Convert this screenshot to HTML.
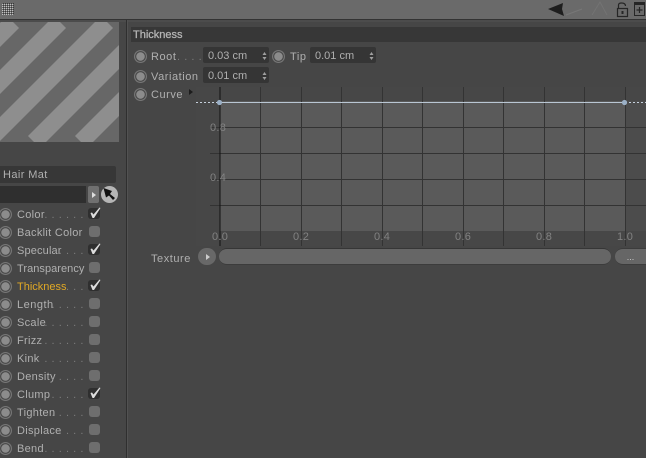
<!DOCTYPE html>
<html><head><meta charset="utf-8">
<style>
html,body{margin:0;padding:0;background:#464646}
#p{position:relative;width:646px;height:458px;overflow:hidden;background:#464646;font-family:"Liberation Sans",sans-serif;font-size:11px;color:#b0b0b0}
#p div{position:absolute;white-space:nowrap}
.t{line-height:14px;letter-spacing:.55px}
.s{line-height:14px;letter-spacing:.3px;left:17px}
.d{color:#7c7c7c;line-height:14px;right:562px;letter-spacing:.55px}
.r{width:13px;height:13px;border-radius:50%;background:radial-gradient(circle,#8c8c8c 0,#8c8c8c 3.9px,#454545 4.6px,#484848 5.1px,#787878 5.6px,#747474 6.5px)}
.cb{width:11px;height:11px;left:89px;border-radius:3px;background:#6e6e6e}
.cb.on{left:88px;width:12px;background:#2f2f2f}
.f{background:#353535;border-radius:2px;height:16px;line-height:18px;color:#b0b0b0;padding-left:5px;box-sizing:border-box;width:66px}
.ax{color:#828282;line-height:13px;letter-spacing:.3px}
</style></head><body>
<div id="p">
<div style="left:0;top:0;width:646px;height:19px;background:#6a6a6a"></div>
<div style="left:0;top:19px;width:646px;height:1px;background:#333"></div>
<div style="left:0;top:20px;width:646px;height:2px;background:#4c4c4c"></div>
<svg style="position:absolute;left:0;top:0" width="646" height="458">
<defs><pattern id="ht" width="2" height="2" patternUnits="userSpaceOnUse"><rect width="1" height="1" fill="#c0c0c0"/><rect x="1" y="1" width="1" height="1" fill="#3a3a3a"/></pattern>
<clipPath id="pc"><rect x="0" y="22" width="119" height="120"/></clipPath></defs>
<rect x="2" y="3" width="12" height="12" fill="url(#ht)"/>
<path d="M548 9 L563 3 L562 9 L564 16 Z" fill="#1e1e1e"/>
<path d="M566 15 L582 9" stroke="#777" stroke-width="1.2" fill="none"/>
<path d="M592 15 L600 2 L607 15" fill="none" stroke="#737373"/>
<rect x="617.5" y="8.5" width="10" height="8" fill="none" stroke="#262626" stroke-width="1.2"/>
<path d="M618.5 8 V5 Q618.5 3 621.5 3 Q625.5 3 625.5 6" fill="none" stroke="#262626" stroke-width="1.2"/>
<rect x="621.5" y="11" width="2" height="3" fill="#262626"/>
<rect x="634.5" y="4.5" width="10" height="11" fill="#6a6a6a" stroke="#262626"/>
<rect x="634" y="2" width="11" height="2" fill="#262626"/>
<path d="M639.5 7 V13 M636.5 10 H642.5" stroke="#262626" stroke-width="1.2"/>

<rect x="0" y="22" width="119" height="120" fill="#676767"/>
<g clip-path="url(#pc)" stroke="#8e8e8e" stroke-width="17" fill="none">
<path d="M13 22 L-107 142 M60 22 L-60 142 M107 22 L-13 142 M154 22 L34 142 M201 22 L81 142 M248 22 L128 142"/>
</g>
<rect x="126" y="20" width="1" height="438" fill="#2f2f2f"/>
<rect x="127" y="20" width="1" height="438" fill="#525252"/>

<rect x="196" y="87" width="450" height="159" fill="#474747"/>
<rect x="220" y="101" width="405" height="130" fill="#5a5a5a"/>
<rect x="625" y="101" width="21" height="130" fill="#4c4c4c"/>
<g stroke="#333" stroke-width="1">
<path d="M210 127.5H646M210 153.5H646M210 179.5H646M210 205.5H646"/>
<path d="M260.5 87V246M301.5 87V246M341.5 87V246M382.5 87V246M422.5 87V246M463.5 87V246M503.5 87V246M544.5 87V246M584.5 87V246M625.5 87V246"/>
</g>
<path d="M220 87V246" stroke="#111" stroke-width="1"/>
<path d="M196 102.5H220M625 102.5H646" stroke="#c5d0dc" stroke-width="1" stroke-dasharray="2 2"/>
<path d="M220 102.5H625" stroke="#b9c6d3" stroke-width="1"/>
<circle cx="219.5" cy="102.5" r="2.6" fill="#9bb0c6"/>
<circle cx="624.5" cy="102.5" r="2.6" fill="#9bb0c6"/>
<path d="M189 89 L193 92 L189 95 Z" fill="#1c1c1c"/>
</svg>

<!-- Header -->
<div style="left:131px;top:27px;width:515px;height:15px;background:#373737"></div>
<div style="left:133px;top:28px;line-height:15px;color:#b4b4b4;-webkit-text-stroke:.3px #b4b4b4">Thickness</div>

<!-- Params -->
<div class="r" style="left:134px;top:50px"></div>
<div class="t" style="left:151px;top:50px">Root</div>
<div class="t" style="left:177px;top:50px;color:#7c7c7c">. . . .</div>
<div class="f" style="left:203px;top:47px">0.03 cm</div>
<div class="r" style="left:272px;top:50px"></div>
<div class="t" style="left:290px;top:50px">Tip</div>
<div class="f" style="left:310px;top:47px">0.01 cm</div>
<div class="r" style="left:134px;top:70px"></div>
<div class="t" style="left:151px;top:70px">Variation</div>
<div class="f" style="left:203px;top:67px">0.01 cm</div>
<div class="r" style="left:134px;top:88px"></div>
<div class="t" style="left:151px;top:88px">Curve</div>
<svg style="position:absolute;left:0;top:0" width="646" height="100">
<path d="M262.5 55 L264.5 52 L266.5 55 Z M262.5 57 L264.5 60 L266.5 57 Z M262.5 75 L264.5 72 L266.5 75 Z M262.5 77 L264.5 80 L266.5 77 Z M369.5 55 L371.5 52 L373.5 55 Z M369.5 57 L371.5 60 L373.5 57 Z" fill="#a0a0a0"/>
</svg>

<!-- Graph labels -->
<div class="ax" style="left:210px;top:122px">0.8</div>
<div class="ax" style="left:210px;top:172px">0.4</div>
<div class="ax" style="left:212px;top:231px">0.0</div>
<div class="ax" style="left:293px;top:231px">0.2</div>
<div class="ax" style="left:374px;top:231px">0.4</div>
<div class="ax" style="left:455px;top:231px">0.6</div>
<div class="ax" style="left:536px;top:231px">0.8</div>
<div class="ax" style="left:617px;top:231px">1.0</div>

<!-- Texture -->
<div class="t" style="left:151px;top:252px">Texture</div>
<div style="left:198px;top:248px;width:18px;height:17px;border-radius:9px;background:#686868"></div>
<div style="left:206px;top:254px;width:0;height:0;border-left:4px solid #ccc;border-top:3px solid transparent;border-bottom:3px solid transparent"></div>
<div style="left:219px;top:248px;width:392px;height:17px;border-radius:8px;background:#666;box-sizing:border-box;border-top:1px solid #363636;border-bottom:1px solid #3c3c3c"></div>
<div style="left:615px;top:248px;width:31px;height:17px;border-radius:8px 0 0 8px;background:#666;box-sizing:border-box;border-top:1px solid #3c3c3c;border-bottom:1px solid #3c3c3c;color:#ccc;font-size:9px;line-height:17px;text-align:center">...</div>

<!-- Sidebar -->
<div style="left:0;top:166px;width:116px;height:17px;background:#373737;border-radius:0 2px 2px 0"></div>
<div class="t" style="left:3px;top:168px;letter-spacing:.4px">Hair Mat</div>
<div style="left:0;top:186px;width:86px;height:17px;background:#2f2f2f"></div>
<div style="left:88px;top:186px;width:11px;height:17px;background:#707070;border-radius:2px"></div>
<div style="left:92px;top:192px;width:0;height:0;border-left:4px solid #ddd;border-top:3px solid transparent;border-bottom:3px solid transparent"></div>
<div style="left:101px;top:186px;width:17px;height:17px;border-radius:50%;background:#b5b5b5"></div>
<svg style="position:absolute;left:101px;top:186px" width="17" height="17"><path d="M2.5 2 L11 5 L9 8 L14 12 L12 14 L8 9.5 L5 11.5 Z" fill="#111"/></svg>

<div class="r" style="left:-1px;top:208px"></div><div class="s" style="top:208px">Color</div><div class="d" style="top:208px">. . . . . .</div><div class="cb on" style="top:208px"></div>
<div class="r" style="left:-1px;top:226px"></div><div class="s" style="top:226px">Backlit Color</div><div class="cb" style="top:226px"></div>
<div class="r" style="left:-1px;top:244px"></div><div class="s" style="top:244px;letter-spacing:.15px">Specular</div><div class="d" style="top:244px">. . . .</div><div class="cb on" style="top:244px"></div>
<div class="r" style="left:-1px;top:262px"></div><div class="s" style="top:262px;letter-spacing:.05px">Transparency</div><div class="cb" style="top:262px"></div>
<div class="r" style="left:-1px;top:280px"></div><div class="s" style="top:280px;color:#e0a825;letter-spacing:0">Thickness</div><div class="d" style="top:280px">. . .</div><div class="cb on" style="top:280px"></div>
<div class="r" style="left:-1px;top:298px"></div><div class="s" style="top:298px;letter-spacing:.5px">Length</div><div class="d" style="top:298px">. . . . .</div><div class="cb" style="top:298px"></div>
<div class="r" style="left:-1px;top:316px"></div><div class="s" style="top:316px">Scale</div><div class="d" style="top:316px">. . . . . . .</div><div class="cb" style="top:316px"></div>
<div class="r" style="left:-1px;top:334px"></div><div class="s" style="top:334px">Frizz</div><div class="d" style="top:334px">. . . . . . .</div><div class="cb" style="top:334px"></div>
<div class="r" style="left:-1px;top:352px"></div><div class="s" style="top:352px">Kink</div><div class="d" style="top:352px">. . . . . . .</div><div class="cb" style="top:352px"></div>
<div class="r" style="left:-1px;top:370px"></div><div class="s" style="top:370px">Density</div><div class="d" style="top:370px">. . . . .</div><div class="cb" style="top:370px"></div>
<div class="r" style="left:-1px;top:388px"></div><div class="s" style="top:388px">Clump</div><div class="d" style="top:388px">. . . . . . .</div><div class="cb on" style="top:388px"></div>
<div class="r" style="left:-1px;top:406px"></div><div class="s" style="top:406px">Tighten</div><div class="d" style="top:406px">. . . . .</div><div class="cb" style="top:406px"></div>
<div class="r" style="left:-1px;top:424px"></div><div class="s" style="top:424px">Displace</div><div class="d" style="top:424px">. . . .</div><div class="cb" style="top:424px"></div>
<div class="r" style="left:-1px;top:442px"></div><div class="s" style="top:442px">Bend</div><div class="d" style="top:442px">. . . . . . .</div><div class="cb" style="top:442px"></div>

<svg style="position:absolute;left:0;top:0" width="646" height="458">
<defs><path id="ck" d="M90.5 213 L92 212.5 L93.5 214.5 L99.5 207.5 L100.5 208 L94 218 L92.5 218 Z" fill="#dcdcdc"/></defs>
<use href="#ck"/>
<use href="#ck" y="36"/>
<use href="#ck" y="72"/>
<use href="#ck" y="180"/>
</svg>
</div>
</body></html>
